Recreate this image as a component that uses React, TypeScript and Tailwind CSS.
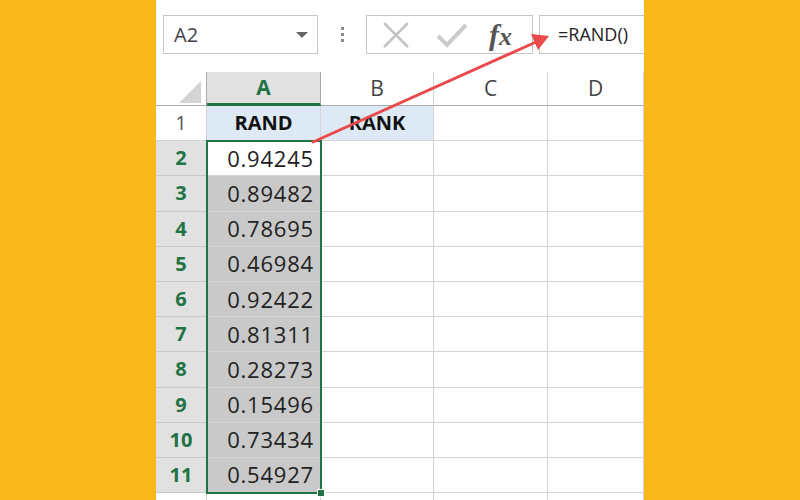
import React from 'react';

const values = ['0.94245', '0.89482', '0.78695', '0.46984', '0.92422', '0.81311', '0.28273', '0.15496', '0.73434', '0.54927'];

const line = 'border-r border-b border-[#d4d4d4]';

const App: React.FC = () => {
  return (
    <div className="w-[800px] h-[500px] bg-[#f9b81b] flex justify-center overflow-hidden">
      <div className="relative w-[488px] h-full bg-white overflow-hidden font-['Open_Sans',sans-serif]">
        {/* formula bar */}
        <div className="h-[72px] flex items-start pt-[15px] pl-[7px]">
          <div className="w-[155px] h-[39px] border border-[#c6c6c6] flex items-center justify-between pl-[10px] pr-[9px] shrink-0">
            <span className="text-[20px] text-[#444]">A2</span>
            <span className="w-0 h-0 border-l-[6px] border-r-[6px] border-t-[6px] border-l-transparent border-r-transparent border-t-[#666]" />
          </div>
          <div className="w-[48px] h-[39px] flex flex-col items-center justify-center gap-[3px] shrink-0">
            <span className="w-[3px] h-[3px] bg-[#8a8a8a]" />
            <span className="w-[3px] h-[3px] bg-[#8a8a8a]" />
            <span className="w-[3px] h-[3px] bg-[#8a8a8a]" />
          </div>
          <div className="w-[167px] h-[39px] border border-[#c6c6c6] flex items-center shrink-0 pl-[15px]">
            <svg width="28" height="28" viewBox="0 0 28 28">
              <path d="M2 2 L26 26 M26 2 L2 26" stroke="#c4c4c4" strokeWidth="2.5" fill="none" />
            </svg>
            <svg width="34" height="30" viewBox="0 0 34 30" className="ml-[25px]">
              <path d="M3 16 L12 25 L31 5" stroke="#cbcbcb" strokeWidth="4" fill="none" />
            </svg>
            <span className="ml-[20px] font-['Liberation_Serif',serif] italic font-bold text-[30px] text-[#555] leading-none">
              f<span className="text-[26px]">x</span>
            </span>
          </div>
          <div className="ml-[6px] w-[160px] h-[39px] border border-[#c6c6c6] flex items-center pl-[18px] shrink-0">
            <span className="text-[18px] text-[#222]">=RAND()</span>
          </div>
        </div>

        {/* grid */}
        <div className="grid grid-cols-[51px_114px_113px_114px_1fr] grid-rows-[34px_repeat(12,35.2px)]">
          {/* header row */}
          <div className="border-r border-b border-[#ababab] flex items-end justify-end pr-[5px] pb-[2px]">
            <svg width="22" height="22" viewBox="0 0 22 22">
              <path d="M22 0 L22 22 L0 22 Z" fill="#d4d4d4" />
            </svg>
          </div>
          <div className="bg-[#e1e1e1] border-r border-[#ababab] border-b-[3px] border-b-[#217346] flex items-center justify-center text-[21px] font-bold text-[#217346]">
            A
          </div>
          {['B', 'C', 'D'].map((c) => (
            <div key={c} className="border-r border-b border-[#d4d4d4] border-b-[#ababab] flex items-center justify-center text-[21px] text-[#444]">
              {c}
            </div>
          ))}

          {/* row 1 */}
          <div className={`${line} flex items-center justify-center text-[20px] text-[#555]`}>1</div>
          <div className={`${line} bg-[#dde9f5] flex items-center justify-center text-[20px] font-bold text-[#111]`}>RAND</div>
          <div className={`${line} bg-[#dde9f5] flex items-center justify-center text-[20px] font-bold text-[#111]`}>RANK</div>
          <div className={line} />
          <div className={line} />

          {values.map((v, i) => (
            <React.Fragment key={v}>
              <div className="bg-[#e1e1e1] border-r border-b border-[#c8c8c8] flex items-center justify-center text-[20px] font-bold text-[#217346]">
                {i + 2}
              </div>
              <div className={`${line} ${i === 0 ? 'bg-white' : 'bg-[#c9c9c9]'} flex items-center justify-end pr-[6px] text-[22px] tracking-[0.8px] text-[#222]`}>
                {v}
              </div>
              <div className={line} />
              <div className={line} />
              <div className={line} />
            </React.Fragment>
          ))}
          <div className={line} />
          <div className={line} />
          <div className={line} />
          <div className={line} />
          <div className={line} />
        </div>

        {/* selection border */}
        <div className="absolute left-[50px] top-[140px] w-[116px] h-[354px] border-2 border-[#217346]" />
        <div className="absolute left-[161px] top-[489px] w-[8px] h-[8px] bg-[#217346] border border-white" />

        {/* arrow */}
        <svg className="absolute left-0 top-0" width="488" height="500" viewBox="0 0 488 500">
          <line x1="157" y1="142" x2="380" y2="42" stroke="#ea4a4b" strokeWidth="3" strokeLinecap="round" />
          <path d="M393 36 L375 34 L382 50 Z" fill="#ea4a4b" />
        </svg>
      </div>
    </div>
  );
};

export default App;
